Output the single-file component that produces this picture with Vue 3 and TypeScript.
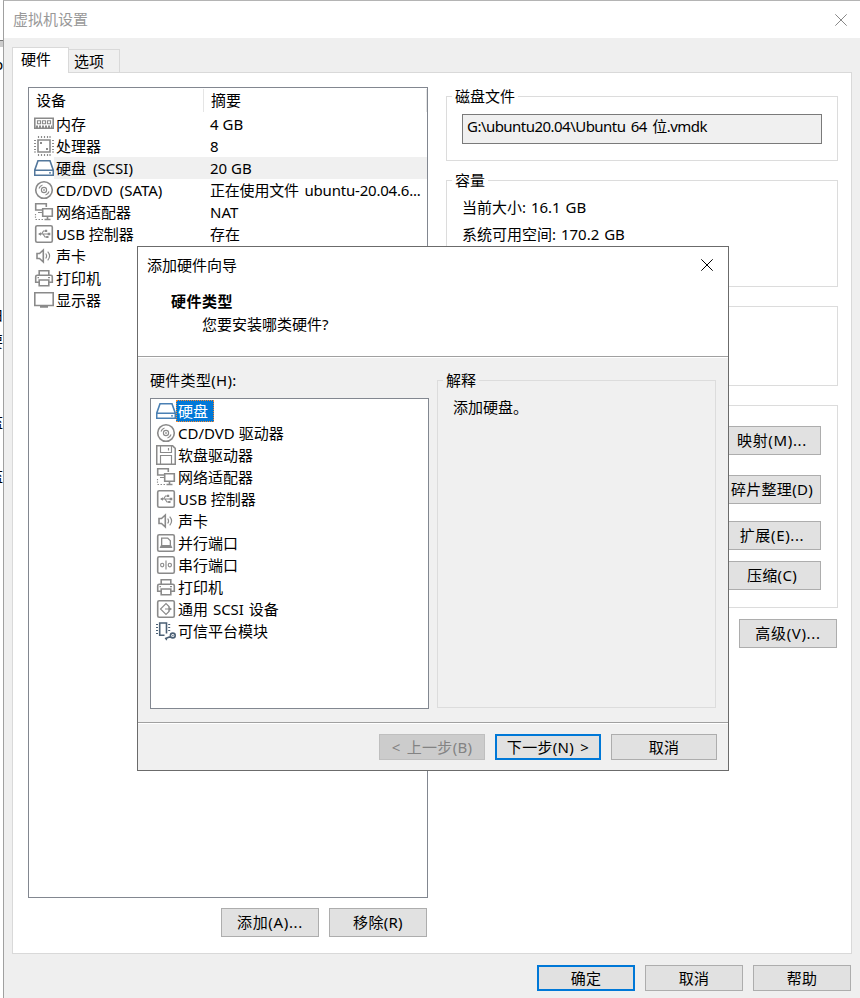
<script setup lang="ts">
import { ref } from 'vue'

type IconName =
  | 'memory' | 'cpu' | 'disk' | 'disc' | 'network' | 'usb' | 'sound' | 'printer'
  | 'display' | 'floppy' | 'parallel' | 'serial' | 'scsi' | 'tpm'

interface Glyph { line?: string; thin?: string; solid?: string }
interface Device { icon: IconName; name: string; summary: string }
interface Hardware { icon: IconName; name: string }

const frame = 'M3.2 1.7H16.8Q18.3 1.7 18.3 3.2V16.8Q18.3 18.3 16.8 18.3H3.2Q1.7 18.3 1.7 16.8V3.2Q1.7 1.7 3.2 1.7Z'

const glyphs: Record<IconName, Glyph> = {
  memory: {
    line: 'M.8 4.3H19.2V14.2H.8Z',
    thin: 'M3.5 6.7H6.5V9.7H3.5ZM8.5 6.7H11.5V9.7H8.5ZM13.5 6.7H16.5V9.7H13.5Z',
    solid: 'M2 11.5H4V14H2ZM5 11.5H7V14H5ZM8 11.5H10V14H8ZM11 11.5H13V14H11ZM14 11.5H16V14H14ZM17 11.5H18V14H17Z',
  },
  cpu: {
    line: 'M4 4H16V16H4Z',
    thin: 'M4.5 0V2M7.5 0V2M10.5 0V2M13.5 0V2M16 0V2M4.5 18V20M7.5 18V20M10.5 18V20M13.5 18V20M16 18V20M0 4.5H2M0 7.5H2M0 10.5H2M0 13.5H2M0 16H2M18 4.5H20M18 7.5H20M18 10.5H20M18 13.5H20M18 16H20',
    solid: 'M6 6H8V8H6ZM12 12H14V14H12Z',
  },
  disk: {
    line: 'M4 2.7H16L19.3 12.2V17.3H.7V12.2ZM.9 12.2H19.1',
    thin: 'M15 14.8H17',
  },
  disc: {
    line: 'M18.3 10A8.3 8.3 0 1 1 1.7 10A8.3 8.3 0 1 1 18.3 10Z',
    thin: 'M12.6 10A2.6 2.6 0 1 1 7.4 10A2.6 2.6 0 1 1 12.6 10ZM5 8.5Q5.8 5.8 8.5 5M15 11.5Q14.2 14.2 11.5 15',
    solid: 'M9.2 9.2H10.8V10.8H9.2Z',
  },
  network: {
    line: 'M8 8H1.7V1.7H12.3V5M8.7 6.7H18.3V14.3H8.7ZM13.5 14.5V17M10.5 17.5H16.5',
    thin: 'M4 10.5H8M1.5 12V13.2M1.5 14.5V15.7M1.5 17.5H3M4.5 17.5H6M7.5 17.5H9',
  },
  usb: {
    line: frame,
    thin: 'M5 10H15M7.5 10L9.5 7H11.5M9 10L11 13H13',
    solid: 'M4 10L7 8.2V11.8ZM13.7 8.7H16.3V11.3H13.7ZM11 5.8H13.2V8H11ZM12.2 12H14.5V14H12.2Z',
  },
  sound: {
    line: 'M3 7.5H5.5L9.3 4V16L5.5 12.5H3Z',
    thin: 'M11.7 7.5Q13.5 10 11.7 12.5M13.7 5.7Q17.5 10 13.7 14.3',
  },
  printer: {
    line: 'M5.2 7.2V2.7H14.8V7.2M5 14.2H1.7V8.7Q1.7 7.2 3.2 7.2H16.8Q18.3 7.2 18.3 8.7V14.2H15M5.2 12H14.8V17.8H5.2Z',
    solid: 'M14 9H16V10.3H14ZM3.5 9H5V10.3H3.5Z',
  },
  display: {
    line: 'M.8 2.8H19.2V15.5H.8ZM6 17H14',
  },
  floppy: {
    line: 'M.7 .7H16.5L19.3 3.5V19.3H.7Z',
    thin: 'M4.5 1V7.5H15.5V1M4.5 19V10.5H15.5V19M12.5 3V5.5',
  },
  parallel: {
    line: frame,
    solid: 'M5 4.5H12L15 7.5V12L16.5 15H3.5L5 12ZM6.3 5.8V12H13.7V8L11.5 5.8Z',
  },
  serial: {
    line: frame,
    thin: 'M10 5.5V14.5M7.8 10A1.6 1.8 0 1 1 4.6 10A1.6 1.8 0 1 1 7.8 10ZM15.4 10A1.6 1.8 0 1 1 12.2 10A1.6 1.8 0 1 1 15.4 10Z',
  },
  scsi: {
    line: frame,
    thin: 'M13.5 8L10 4.5L4.5 10L10 15.5L13.5 12M9 10H13.5',
    solid: 'M12.3 7.3L16 10L12.3 12.7Z',
  },
  tpm: {
    line: 'M8.5 14.3H3.7V2H10.5V12.5M19.2 14.5A2.4 2.4 0 1 1 14.4 14.5A2.4 2.4 0 1 1 19.2 14.5ZM14.6 15.5L9 17.8',
    thin: 'M0 3.5H2M0 6.5H2M0 9.5H2M0 12.5H2M12.2 3.5H14.2M12.2 6.5H14.2M12.2 9.5H14.2M10.5 17V19.3',
    solid: 'M16.3 14H17.5V15.2H16.3Z',
  },
}

const devices: Device[] = [
  { icon: 'memory', name: '内存', summary: '4 GB' },
  { icon: 'cpu', name: '处理器', summary: '8' },
  { icon: 'disk', name: '硬盘 (SCSI)', summary: '20 GB' },
  { icon: 'disc', name: 'CD/DVD (SATA)', summary: '正在使用文件 ubuntu-20.04.6...' },
  { icon: 'network', name: '网络适配器', summary: 'NAT' },
  { icon: 'usb', name: 'USB 控制器', summary: '存在' },
  { icon: 'sound', name: '声卡', summary: '' },
  { icon: 'printer', name: '打印机', summary: '' },
  { icon: 'display', name: '显示器', summary: '' },
]

const hardware: Hardware[] = [
  { icon: 'disk', name: '硬盘' },
  { icon: 'disc', name: 'CD/DVD 驱动器' },
  { icon: 'floppy', name: '软盘驱动器' },
  { icon: 'network', name: '网络适配器' },
  { icon: 'usb', name: 'USB 控制器' },
  { icon: 'sound', name: '声卡' },
  { icon: 'parallel', name: '并行端口' },
  { icon: 'serial', name: '串行端口' },
  { icon: 'printer', name: '打印机' },
  { icon: 'scsi', name: '通用 SCSI 设备' },
  { icon: 'tpm', name: '可信平台模块' },
]

const selectedDevice = ref(2)
const selectedHardware = ref(0)
</script>

<template>
  <div class="desktop">
    <div class="behind">
      <div class="behind-bar"></div>
      <span class="sliver s1">p</span>
      <span class="sliver s2">由</span>
      <span class="sliver s3">要</span>
      <span class="sliver s4">监</span>
      <span class="sliver s5">监</span>
    </div>

    <section class="window">
      <header class="titlebar">
        <span>虚拟机设置</span>
        <svg class="close" viewBox="0 0 12 12"><path d="M.3 .3L11.7 11.7M11.7 .3L.3 11.7" /></svg>
      </header>

      <nav class="tabs">
        <div class="tab active">硬件</div>
        <div class="tab">选项</div>
      </nav>

      <main class="page">
        <div class="left">
          <div class="list devices">
            <div class="row head"><span class="c1">设备</span><span class="c2">摘要</span></div>
            <div
              v-for="(d, i) in devices"
              :key="d.name"
              class="row"
              :class="{ current: i === selectedDevice }"
              @click="selectedDevice = i"
            >
              <svg class="icon" :class="d.icon" viewBox="0 0 20 20">
                <path class="line" :d="glyphs[d.icon].line" />
                <path v-if="glyphs[d.icon].thin" class="thin" :d="glyphs[d.icon].thin" />
                <path v-if="glyphs[d.icon].solid" class="solid" :d="glyphs[d.icon].solid" />
              </svg>
              <span class="name">{{ d.name }}</span>
              <span class="summary" :class="{ long: d.summary.length > 12 }">{{ d.summary }}</span>
            </div>
          </div>
          <div class="actions">
            <button class="wide">添加(A)...</button>
            <button>移除(R)</button>
          </div>
        </div>

        <div class="right">
          <div class="group file">
            <span class="legend">磁盘文件</span>
            <div class="path">G:\ubuntu20.04\Ubuntu 64 位.vmdk</div>
          </div>
          <div class="group capacity">
            <span class="legend">容量</span>
            <p>当前大小: 16.1 GB</p>
            <p>系统可用空间: 170.2 GB</p>
          </div>
          <div class="group info"></div>
          <div class="group tools">
            <button class="wide map">映射(M)...</button>
            <button class="defrag">碎片整理(D)</button>
            <button class="wide expand">扩展(E)...</button>
            <button>压缩(C)</button>
          </div>
          <button class="wide advanced">高级(V)...</button>
        </div>
      </main>

      <footer class="bottom">
        <button class="default">确定</button>
        <button>取消</button>
        <button>帮助</button>
      </footer>
    </section>

    <section class="wizard">
      <header class="wizard-head">
        <div class="wizard-title">
          <span>添加硬件向导</span>
          <svg class="close" viewBox="0 0 12 12"><path d="M.3 .3L11.7 11.7M11.7 .3L.3 11.7" /></svg>
        </div>
        <h2>硬件类型</h2>
        <p>您要安装哪类硬件?</p>
      </header>
      <div class="wizard-body">
        <div class="types">
          <label>硬件类型(H):</label>
          <div class="list">
            <div
              v-for="(h, i) in hardware"
              :key="h.name"
              class="row"
              :class="{ picked: i === selectedHardware }"
              @click="selectedHardware = i"
            >
              <svg class="icon" :class="h.icon" viewBox="0 0 20 20">
                <path class="line" :d="glyphs[h.icon].line" />
                <path v-if="glyphs[h.icon].thin" class="thin" :d="glyphs[h.icon].thin" />
                <path v-if="glyphs[h.icon].solid" class="solid" :d="glyphs[h.icon].solid" />
              </svg>
              <span class="name">{{ h.name }}</span>
            </div>
          </div>
        </div>
        <div class="group explain">
          <span class="legend">解释</span>
          <p>添加硬盘。</p>
        </div>
      </div>
      <footer class="wizard-foot">
        <button disabled>&lt; 上一步(B)</button>
        <button class="default">下一步(N) &gt;</button>
        <button>取消</button>
      </footer>
    </section>
  </div>
</template>

<style>
body {
  margin: 0;
  overflow: hidden;
}
</style>

<style scoped>
.desktop,
.desktop * {
  box-sizing: border-box;
}
.desktop {
  position: relative;
  display: flex;
  width: 860px;
  height: 998px;
  overflow: hidden;
  background: #fff;
  color: #000;
  font: 15px/22px 'Noto Sans', 'Noto Sans CJK SC', sans-serif;
}
p,
h2 {
  margin: 0;
}
.behind {
  display: flex;
  flex-direction: column;
  width: 3px;
  height: 998px;
  overflow: hidden;
  flex: none;
}
.behind-bar {
  height: 7px;
  margin-top: 40px;
  border-top: 1px solid #777;
  background: #ccc;
  flex: none;
}
.sliver {
  height: 20px;
  line-height: 20px;
  width: 15px;
  margin-left: -12px;
  flex: none;
}
.s1 { margin-top: 7px; margin-left: -6px; }
.s2 { margin-top: 230px; }
.s3 { margin-top: 7px; }
.s4 { margin-top: 61px; }
.s5 { margin-top: 34px; }

.window {
  display: flex;
  flex-direction: column;
  width: 857px;
  height: 998px;
  border-left: 1px solid #a0a0a0;
  border-top: 1px solid #b4b4b4;
  background: #efefef;
  flex: none;
}
.titlebar {
  display: flex;
  justify-content: space-between;
  align-items: center;
  height: 37px;
  padding: 0 13px 0 9px;
  background: #fff;
  color: #999;
}
.titlebar span {
  padding-bottom: 2px;
}
.close {
  width: 12px;
  height: 12px;
  fill: none;
  stroke: #000;
  stroke-width: 1;
}
.titlebar .close {
  stroke: #888;
}
.tabs {
  display: flex;
  align-items: flex-end;
  height: 35px;
  padding-left: 8px;
  margin-bottom: -1px;
  position: relative;
}
.tab {
  width: 51px;
  height: 24px;
  padding-left: 5px;
  border: 1px solid #d9d9d9;
  border-left: 0;
  background: #f0f0f0;
}
.tab.active {
  width: 57px;
  height: 26px;
  padding-left: 8px;
  border-left: 1px solid #d9d9d9;
  border-bottom: 0;
  background: #fff;
}
.page {
  display: flex;
  justify-content: space-between;
  width: 840px;
  height: 882px;
  margin-left: 8px;
  padding: 14px 13px 0 15px;
  border: 1px solid #d9d9d9;
  background: #fff;
}
.left {
  width: 400px;
}
.list {
  border: 1px solid #828790;
  background: #fff;
}
.devices {
  height: 811px;
  padding-left: 5px;
}
.row {
  display: flex;
  height: 22px;
  align-items: center;
  white-space: nowrap;
}
.row.head {
  height: 25px;
}
.head .c1 {
  width: 170px;
  height: 23px;
  padding: 0 0 0 2px;
  border-right: 1px solid #e5e5e5;
}
.head .c2 {
  flex: 1;
  height: 23px;
  padding: 0 0 0 7px;
  border-right: 1px solid #e5e5e5;
}
.icon {
  width: 20px;
  height: 20px;
  flex: none;
  color: #8a8a8a;
}
.line,
.thin {
  fill: none;
  stroke: currentColor;
  stroke-width: 1.6;
}
.thin {
  stroke-width: 1.15;
}
.solid {
  fill: currentColor;
  fill-rule: evenodd;
}
.devices .disk {
  color: #52779c;
}
.types .disk {
  color: #4a80b4;
}
.icon.tpm {
  color: #4b6075;
}
.name {
  height: 22px;
  padding-left: 2px;
}
.devices .name {
  width: 156px;
  word-spacing: 3px;
}
.devices .usb + .name {
  word-spacing: 0;
}
.summary {
  flex: 1;
  height: 22px;
}
.summary.long {
  word-spacing: 2px;
  letter-spacing: -0.2px;
}
.current .name,
.current .summary {
  background: #f0f0f0;
}
.types .scsi + .name {
  word-spacing: 1px;
}
.picked .name {
  padding: 0 5px 0 1px;
  border: 1px dotted #ff8728;
  background: #0078d7;
  color: #fff;
  line-height: 20px;
}
button {
  display: block;
  width: 98px;
  height: 29px;
  padding: 0 0 2px;
  border: 1px solid #adadad;
  background: #e1e1e1;
  color: #000;
  font: inherit;
  line-height: 20px;
  text-align: center;
  white-space: nowrap;
  letter-spacing: 0.3px;
  word-spacing: 2px;
}
button.wide {
  letter-spacing: 0.65px;
}
button.default {
  border: 2px solid #0078d7;
}
button:disabled {
  border-color: #bfbfbf;
  background: #ccc;
  color: #838383;
}
.actions {
  display: flex;
  justify-content: flex-end;
  gap: 10px;
  padding: 10px 1px 0 0;
}
.right {
  width: 392px;
  padding-top: 9px;
}
.group {
  border: 1px solid #dcdcdc;
}
.legend {
  display: table;
  height: 20px;
  margin: -11px 0 0 5px;
  padding: 0 3px;
  background: #fff;
  line-height: 20px;
}
.file {
  height: 65px;
}
.path {
  height: 30px;
  margin: 8px 15px 0;
  padding: 0 4px;
  border: 1px solid #7a7a7a;
  background: #f0f0f0;
  letter-spacing: -0.53px;
  word-spacing: 2px;
}
.capacity {
  height: 107px;
  margin-top: 19px;
}
.capacity p {
  margin: 7px 0 -2px 15px;
  word-spacing: 1px;
}
.capacity .legend + p {
  margin-top: 6px;
}
.info {
  height: 80px;
  margin-top: 19px;
}
.tools {
  display: flex;
  flex-direction: column;
  align-items: flex-end;
  height: 203px;
  margin-top: 19px;
  padding: 20px 16px 0 0;
}
.map { margin-bottom: 20px; }
.defrag { margin-bottom: 17px; }
.expand { margin-bottom: 11px; }
.advanced {
  margin: 11px 1px 0 auto;
}
.bottom {
  display: flex;
  justify-content: flex-end;
  gap: 10px;
  padding: 11px 9px 0 0;
}
.bottom button,
.wizard-foot button {
  height: 26px;
  padding-bottom: 1px;
}

.wizard {
  position: absolute;
  left: 137px;
  top: 246px;
  width: 592px;
  height: 525px;
  border: 1px solid #6b6b6b;
  background: #f0f0f0;
}
.wizard-head {
  height: 111px;
  border-bottom: 1px solid #fff;
  background: linear-gradient(#a0a0a0, #a0a0a0) bottom / 100% 1px no-repeat #fff;
}
.wizard-title {
  display: flex;
  justify-content: space-between;
  align-items: center;
  height: 36px;
  padding: 0 15px 0 9px;
}
.wizard-head h2 {
  margin: 7px 0 0 33px;
  font-size: 15px;
  font-weight: 700;
  letter-spacing: 0.5px;
}
.wizard-head p {
  margin: 1px 0 0 64px;
}
.wizard-body {
  display: flex;
  height: 364px;
  padding: 11px 12px 0;
  gap: 8px;
}
.types {
  width: 279px;
}
.types label {
  display: block;
  height: 29px;
  letter-spacing: 0.3px;
}
.types .list {
  height: 311px;
  padding: 1px 0 0 5px;
}
.explain {
  width: 279px;
  height: 328px;
  margin-top: 11px;
}
.explain .legend {
  background: #f0f0f0;
}
.explain p {
  margin: 6px 0 0 15px;
}
.wizard-foot {
  display: flex;
  justify-content: flex-end;
  gap: 10px;
  padding: 11px 11px 0 0;
  border-top: 1px solid #a0a0a0;
  box-shadow: inset 0 1px #fff;
}
.wizard-foot button {
  width: 106px;
}
</style>
